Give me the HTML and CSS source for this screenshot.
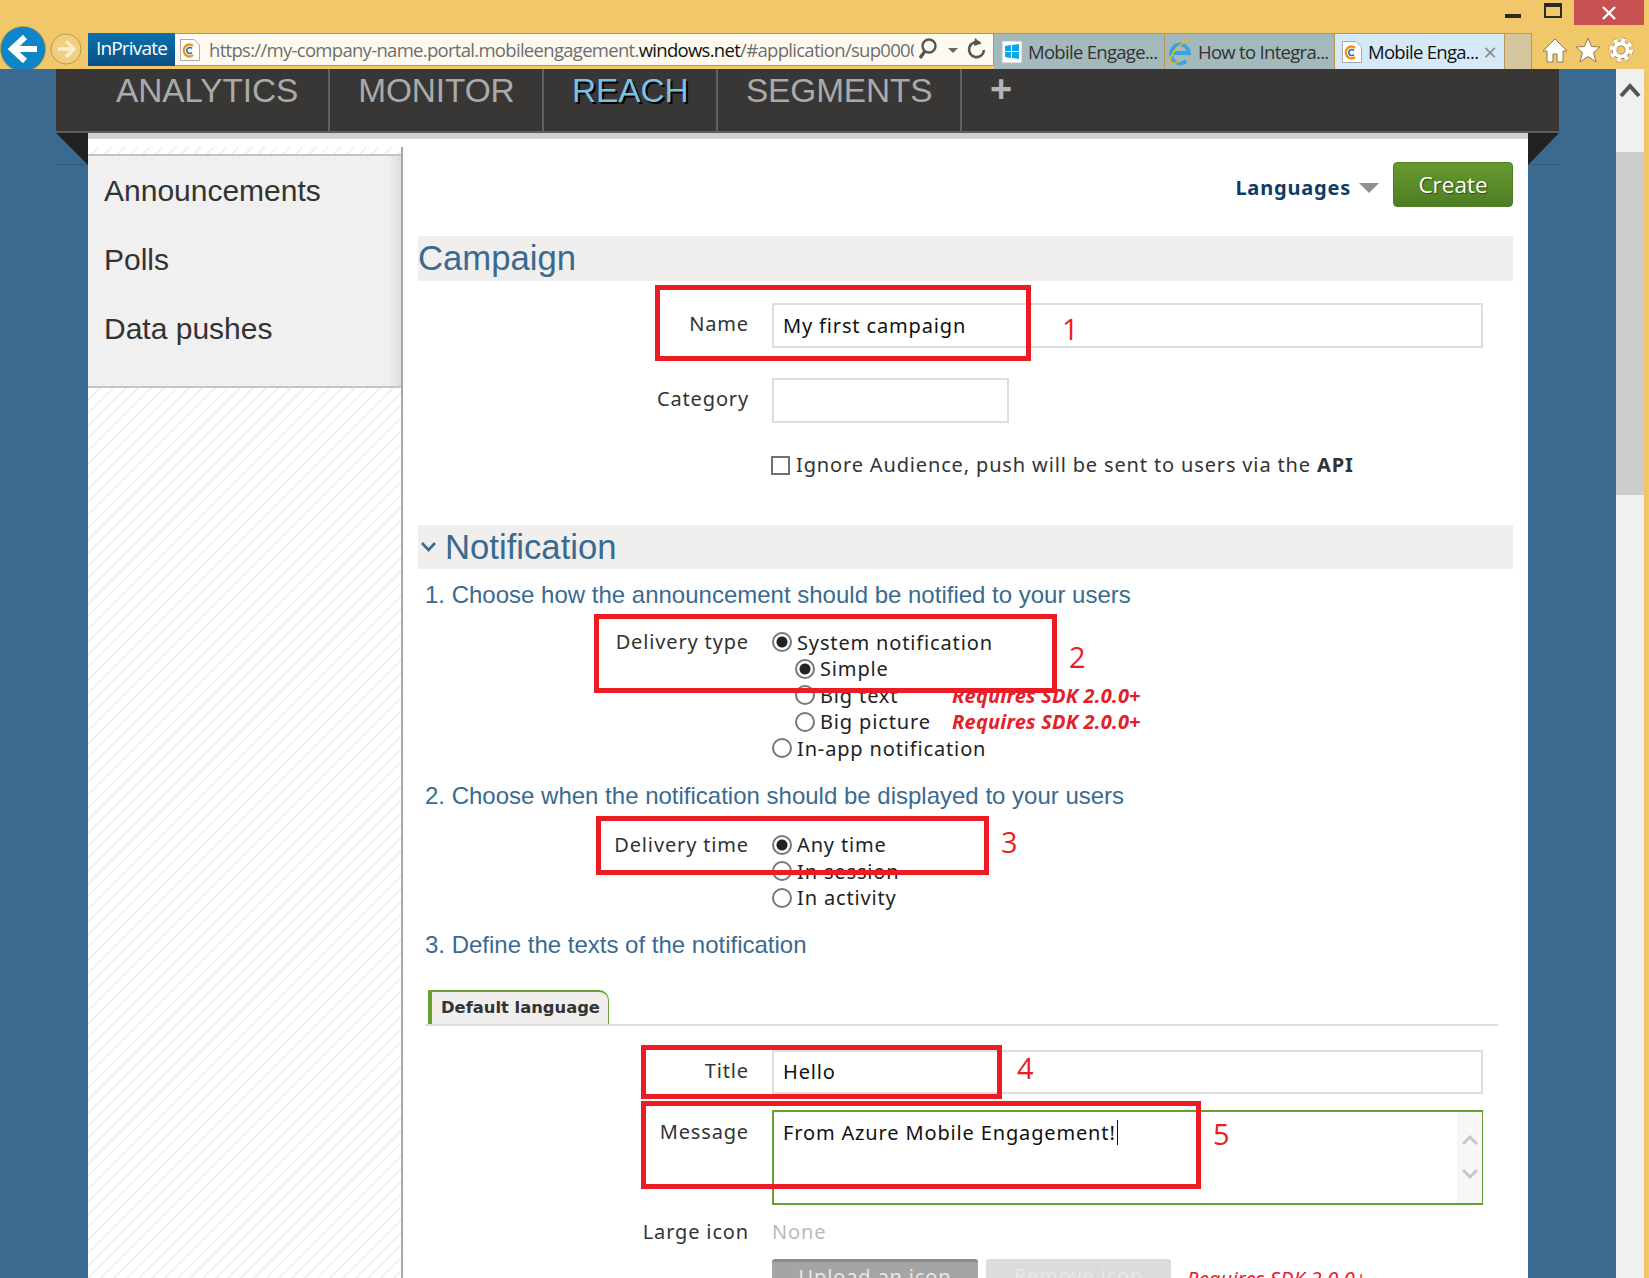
FILE: index.html
```html
<!DOCTYPE html>
<html lang="en">
<head>
    <meta charset="UTF-8" />
    <title>Mobile Engagement</title>
    <link rel="stylesheet" href="styles.css">
</head>
<body>
<div class="window">

    <!-- Browser chrome -->
    <div class="chrome">
        <div class="win-controls">
            <span class="win-min"></span>
            <span class="win-max"></span>
            <span class="win-close">
                <svg width="16" height="16" viewBox="0 0 16 16"><path d="M2 2 L14 14 M14 2 L2 14" stroke="#fff" stroke-width="2.4"/></svg>
            </span>
        </div>
        <div class="toolbar">
            <svg class="back-btn" width="46" height="46" viewBox="0 0 46 46">
                <circle cx="23" cy="23" r="22.5" fill="#0d85c6" stroke="#b8984e"/>
                <path d="M25 11 L12 23 L25 35 M13 23 H37" fill="none" stroke="#fff" stroke-width="6"/>
            </svg>
            <svg class="fwd-btn" width="32" height="32" viewBox="0 0 32 32">
                <circle cx="16" cy="16" r="15" fill="#f2cf80" stroke="#bb9a50"/>
                <path d="M16 8 L24 16 L16 24 M23 16 H8" fill="none" stroke="#fbeecb" stroke-width="3.4"/>
            </svg>
            <div class="inprivate">InPrivate</div>
            <div class="address">
                <svg class="page-icon" width="22" height="24" viewBox="0 0 22 24">
                    <path d="M1.500 1.500 H15 L20.500 7 V22.500 H1.500 Z" fill="#fff" stroke="#aaa"/>
                    <path d="M14 8 A5.500 6 0 1 0 14 17" fill="none" stroke="#ef8f1c" stroke-width="2.400"/>
                    <path d="M13 10.500 A3 3 0 1 0 13 14.500" fill="none" stroke="#2a6fb0" stroke-width="1.600"/>
                </svg>
                <div class="url">https://my-company-name.portal.mobileengagement.<b>windows.net</b>/#application/sup0000</div>
                <svg class="addr-tools" width="70" height="26" viewBox="0 0 70 26">
                    <circle cx="11" cy="9" r="6.500" fill="none" stroke="#555" stroke-width="2.400"/>
                    <path d="M7 14 L2 21" stroke="#555" stroke-width="3.400"/>
                    <path d="M30 11 H40 L35 16 Z" fill="#666"/>
                    <path d="M62 6 A7.500 7.500 0 1 0 66 13" fill="none" stroke="#555" stroke-width="2.600"/>
                    <path d="M57 1 L63.500 6.500 L56 9 Z" fill="#555"/>
                </svg>
            </div>
            <div class="tab">
                <svg width="22" height="24" viewBox="0 0 22 24">
                    <path d="M1 1 H21 V23 H1 Z" fill="#fff" stroke="#bbb"/>
                    <path d="M4 6 L10 5 V11 H4 Z M11 5 L18 4 V11 H11 Z M4 12 H10 V18 L4 17 Z M11 12 H18 V19 L11 18 Z" fill="#0aa5e8"/>
                </svg>
                <span>Mobile Engage...</span>
            </div>
            <div class="tab">
                <svg width="24" height="28" viewBox="0 0 24 28">
                    <path d="M4 15 H21 A9 9.500 0 1 0 18 23" fill="none" stroke="#3aa3e0" stroke-width="3.800"/>
                    <path d="M21 2 C11 6 2 16 2 24 C3 27 8 25 12 23" fill="none" stroke="#e8b81f" stroke-width="1.800"/>
                </svg>
                <span>How to Integra...</span>
            </div>
            <div class="tab tab-active">
                <svg width="22" height="24" viewBox="0 0 22 24">
                    <path d="M1.500 1.500 H15 L20.500 7 V22.500 H1.500 Z" fill="#fff" stroke="#aaa"/>
                    <path d="M14 8 A5.500 6 0 1 0 14 17" fill="none" stroke="#ef8f1c" stroke-width="2.400"/>
                    <path d="M13 10.500 A3 3 0 1 0 13 14.500" fill="none" stroke="#2a6fb0" stroke-width="1.600"/>
                </svg>
                <span>Mobile Enga...</span>
                <i class="tab-x">×</i>
            </div>
            <div class="tab-new"></div>
            <div class="tools">
                <svg width="26" height="26" viewBox="0 0 26 26">
                    <path d="M13 2 L25 14 H21 V25 H15 V17 H11 V25 H5 V14 H1 Z" fill="#fff" stroke="#8a7b55"/>
                </svg>
                <svg width="26" height="26" viewBox="0 0 26 26">
                    <path d="M13 1 L16.500 9.500 L25 10 L18.500 15.500 L21 25 L13 19.500 L5 25 L7.500 15.500 L1 10 L9.500 9.500 Z" fill="#fff" stroke="#8a7b55"/>
                </svg>
                <svg width="26" height="26" viewBox="0 0 26 26">
                    <circle cx="13" cy="13" r="10" fill="none" stroke="#8a7b55" stroke-width="5" stroke-dasharray="3.850 4"/>
                    <circle cx="13" cy="13" r="6.500" fill="none" stroke="#8a7b55" stroke-width="5.400"/>
                    <circle cx="13" cy="13" r="10" fill="none" stroke="#fff" stroke-width="4" stroke-dasharray="3.850 4"/>
                    <circle cx="13" cy="13" r="6.500" fill="none" stroke="#fff" stroke-width="4"/>
                </svg>
            </div>
        </div>
    </div>

    <div class="stage">
        <div class="page">
            <!-- Top menu -->
            <div class="nav">
                <a class="nav-item">ANALYTICS</a>
                <a class="nav-item">MONITOR</a>
                <a class="nav-item nav-active">REACH</a>
                <a class="nav-item">SEGMENTS</a>
                <a class="nav-item nav-plus">+</a>
            </div>

            <div class="sheet">
                <div class="sidebar">
                    <div class="side-menu">
                        <div class="side-item">Announcements</div>
                        <div class="side-item">Polls</div>
                        <div class="side-item">Data pushes</div>
                    </div>
                </div>

                <div class="main">
                    <div class="actions">
                        <span class="languages">Languages</span>
                        <span class="lang-arrow"></span>
                        <button class="btn-create">Create</button>
                    </div>

                    <!-- Campaign -->
                    <h2 class="bar">Campaign</h2>
                    <div class="row row-name">
                        <label>Name</label>
                        <div class="input">My first campaign</div>
                    </div>
                    <div class="row row-category">
                        <label>Category</label>
                        <div class="input input-short"></div>
                    </div>
                    <div class="row row-check">
                        <span></span>
                        <div class="check-line"><span class="check"></span><span>Ignore Audience, push will be sent to users via the <b>API</b></span></div>
                    </div>

                    <!-- Notification -->
                    <h2 class="bar bar-notif">
                        <svg width="17" height="12" viewBox="0 0 17 12"><path d="M2 2 L8.500 9 L15 2" fill="none" stroke="#3a6a8f" stroke-width="2.600"/></svg>
                        Notification
                    </h2>

                    <h3 class="step step-1">1. Choose how the announcement should be notified to your users</h3>
                    <div class="radios radios-type">
                        <label>Delivery type</label>
                        <div class="radio-list">
                            <div class="radio-row"><span class="radio on"></span>System notification</div>
                            <div class="radio-row sub"><span class="radio on"></span>Simple</div>
                            <div class="radio-row sub"><span class="radio"></span><span class="opt">Big text</span><em class="req">Requires SDK 2.0.0+</em></div>
                            <div class="radio-row sub"><span class="radio"></span><span class="opt">Big picture</span><em class="req">Requires SDK 2.0.0+</em></div>
                            <div class="radio-row"><span class="radio"></span>In-app notification</div>
                        </div>
                    </div>

                    <h3 class="step step-2">2. Choose when the notification should be displayed to your users</h3>
                    <div class="radios radios-time">
                        <label>Delivery time</label>
                        <div class="radio-list">
                            <div class="radio-row"><span class="radio on"></span>Any time</div>
                            <div class="radio-row"><span class="radio"></span>In session</div>
                            <div class="radio-row"><span class="radio"></span>In activity</div>
                        </div>
                    </div>

                    <h3 class="step step-3">3. Define the texts of the notification</h3>
                    <div class="tabs">
                        <div class="lang-tab">Default language</div>
                    </div>

                    <div class="row row-title">
                        <label>Title</label>
                        <div class="input">Hello</div>
                    </div>
                    <div class="row row-message">
                        <label>Message</label>
                        <div class="textarea">
                            <div class="textarea-text">From Azure Mobile Engagement!<span class="caret"></span></div>
                            <div class="textarea-scroll">
                                <svg width="18" height="12" viewBox="0 0 18 12"><path d="M2 10 L9 3 L16 10" fill="none" stroke="#c8c8c8" stroke-width="3"/></svg>
                                <svg width="18" height="12" viewBox="0 0 18 12"><path d="M2 2 L9 9 L16 2" fill="none" stroke="#c8c8c8" stroke-width="3"/></svg>
                            </div>
                        </div>
                    </div>
                    <div class="row row-icon">
                        <label>Large icon</label>
                        <div class="none">None</div>
                    </div>
                    <div class="row row-buttons">
                        <span></span>
                        <div class="icon-btns">
                            <button class="btn-upload">Upload an icon</button>
                            <button class="btn-remove">Remove icon</button>
                            <em class="req req-plain">Requires SDK 2.0.0+</em>
                        </div>
                    </div>
                </div>
            </div>
        </div>

        <div class="scrollbar">
            <svg width="22" height="18" viewBox="0 0 22 18"><path d="M2 15 L11 5 L20 15" fill="none" stroke="#555" stroke-width="4"/></svg>
            <div class="scroll-thumb"></div>
        </div>
    </div>

    <!-- Red annotations drawn over the screenshot -->
    <div class="mark mark-1"></div><span class="mark-num num-1">1</span>
    <div class="mark mark-2"></div><span class="mark-num num-2">2</span>
    <div class="mark mark-3"></div><span class="mark-num num-3">3</span>
    <div class="mark mark-4"></div><span class="mark-num num-4">4</span>
    <div class="mark mark-5"></div><span class="mark-num num-5">5</span>
</div>
</body>
</html>
```

FILE: styles.css
```css
* {
    box-sizing: border-box;
}

body {
    margin: 0;
    font-family: "Liberation Sans", Arial, sans-serif;
    background: #3a6a8f;
}

.window {
    position: relative;
    width: 1649px;
    height: 1278px;
    overflow: hidden;
    display: flex;
    flex-direction: column;
}

/* Browser chrome */
.chrome {
    height: 69px;
    flex: none;
    background: #f0c869;
    overflow: hidden;
    font-family: "Open Sans", sans-serif;
}

.win-controls {
    height: 33px;
    display: flex;
    justify-content: flex-end;
    align-items: flex-start;
    padding-right: 5px;
}

.win-min {
    width: 16px;
    height: 4px;
    background: #2a2a2a;
    margin: 14px 23px 0 0;
}

.win-max {
    width: 18px;
    height: 15px;
    border: 2px solid #2a2a2a;
    border-top-width: 4px;
    margin: 3px 12px 0 0;
}

.win-close {
    width: 70px;
    height: 25px;
    background: #c75050;
    display: flex;
    align-items: center;
    justify-content: center;
}

.toolbar {
    height: 36px;
    display: flex;
    align-items: flex-start;
}

.back-btn {
    margin-top: -7px;
    flex: none;
}

.fwd-btn {
    margin: 0 6px 0 4px;
    flex: none;
}

.inprivate {
    width: 87px;
    height: 33px;
    background: linear-gradient(#0a70ad, #0b4f85);
    color: #fff;
    font-size: 19px;
    line-height: 31px;
    text-align: center;
    letter-spacing: -0.8px;
    flex: none;
}

.address {
    width: 819px;
    height: 33px;
    background: #fffaf0;
    border: 1px solid #b8984e;
    border-left: none;
    display: flex;
    align-items: center;
    flex: none;
}

.page-icon {
    margin-left: 4px;
    flex: none;
}

.url {
    margin-left: 8px;
    margin-right: 7px;
    width: 705px;
    overflow: hidden;
    white-space: nowrap;
    font-size: 18.500px;
    letter-spacing: -0.7px;
    color: #6e6e6e;
    flex: none;
}

.url b {
    font-weight: normal;
    color: #111;
}

.addr-tools {
    flex: none;
    margin-left: -3px;
}

.tab {
    width: 171px;
    height: 36px;
    background: #a3b9bc;
    border-right: 1px solid #b8984e;
    border-top: 1px solid #b8984e;
    display: flex;
    align-items: center;
    gap: 5px;
    padding-left: 7px;
    font-size: 18.500px;
    letter-spacing: -0.7px;
    color: #333;
    white-space: nowrap;
    overflow: hidden;
    flex: none;
}

.tab + .tab {
    width: 170px;
    padding-left: 3px;
    gap: 6px;
}

.tab-active {
    background: #d6e9f9;
    color: #111;
}

.tab + .tab.tab-active {
    padding-left: 6px;
    gap: 5px;
}

.tab-x {
    font-style: normal;
    font-size: 24px;
    line-height: 20px;
    color: #8a8a8a;
    margin-left: 0;
}

.tab-new {
    width: 27px;
    height: 36px;
    background: #d5c6a0;
    border-top: 1px solid #b8984e;
    border-right: 1px solid #b8984e;
    flex: none;
}

.tools {
    display: flex;
    gap: 7px;
    margin: 4px 0 0 10px;
}

/* Page */
.stage {
    flex: 1;
    display: flex;
    min-height: 0;
    background: #f0c869;
}

.page {
    flex: 1;
    min-width: 0;
    padding-left: 56px;
    background: linear-gradient(#2f5a7a, #2f5a7a) no-repeat 56px 95px / 1503px 1px, #3a6a8f;
}

.nav {
    width: 1503px;
    height: 64px;
    background: #383735;
    border-bottom: 2px solid #5f5f5f;
    padding-left: 31px;
    display: flex;
}

.nav-item {
    padding: 0 27.500px 0 28px;
    border-right: 2px solid #5f5f5f;
    color: #aaa;
    font-size: 33.400px;
    line-height: 43px;
    letter-spacing: -0.1px;
}

.nav-item:first-child {
    padding-left: 29px;
    padding-right: 30px;
}

.nav-active {
    color: #7cc0e0;
    text-shadow: 2px 2px 0 #000;
}

.nav-plus {
    border: none;
    font-weight: bold;
    color: #b5b5b5;
    font-size: 38px;
    line-height: 40px;
}

.sheet {
    position: relative;
    width: 1440px;
    margin-left: 32px;
    height: 1145px;
    background: #fff;
    border-top: 6px solid #d0d0d0;
    display: flex;
}

/* The two folded corners under the menu */
.sheet::before,
.sheet::after {
    content: "";
    position: absolute;
    top: -6px;
    width: 0;
    height: 0;
    border-top: 32px solid #222120;
}

.sheet::before {
    left: -32px;
    border-left: 32px solid transparent;
}

.sheet::after {
    right: -31px;
    border-right: 31px solid transparent;
}

.sidebar {
    width: 315px;
    flex: none;
    margin-top: 8px;
    padding-top: 7px;
    border-right: 2px solid #a8a8a8;
    background: repeating-linear-gradient(135deg, #fff 0, #fff 7px, #f1f1f1 7px, #f1f1f1 9px);
}

.side-menu {
    height: 234px;
    padding-left: 16px;
    background: linear-gradient(to right, #f0f0f0 96%, #dcdcdc);
    border-top: 2px solid #c4c4c4;
    border-bottom: 2px solid #c8c4c0;
}

.side-item {
    height: 69px;
    font-size: 30px;
    line-height: 69px;
    color: #333;
}

.main {
    flex: 1;
    min-width: 0;
    padding: 23px 15px 0 15px;
    font-family: "Noto Sans", sans-serif;
    font-size: 20px;
    letter-spacing: 0.85px;
    color: #333;
}

.actions {
    height: 45px;
    display: flex;
    align-items: center;
    justify-content: flex-end;
}

.languages {
    font-weight: bold;
    letter-spacing: 0.8px;
    color: #0e3c66;
    margin-top: 6px;
}

.lang-arrow {
    width: 0;
    height: 0;
    margin: 6px 14px 0 8px;
    border-left: 10px solid transparent;
    border-right: 10px solid transparent;
    border-top: 10px solid #8f8f8f;
}

.btn-create {
    width: 120px;
    height: 45px;
    border: 1px solid #4f8025;
    border-radius: 4px;
    background: linear-gradient(#659a2e, #4e7d25);
    color: #fff;
    font-family: "Open Sans", sans-serif;
    font-size: 22.500px;
    text-shadow: 1px 1px 1px #2d4a14;
    padding: 0;
}

.bar {
    margin: 29px 0 0;
    height: 45px;
    background: #f0efed;
    font-family: "Liberation Sans", Arial, sans-serif;
    font-size: 34.700px;
    font-weight: normal;
    line-height: 44px;
    letter-spacing: 0;
    color: #3a6a8f;
}

.bar-notif {
    margin-top: 47px;
    height: 44px;
    display: flex;
    align-items: center;
    gap: 8px;
    padding-left: 2px;
}

.step {
    margin: 11px 0 0 7px;
    font-family: "Liberation Sans", Arial, sans-serif;
    font-size: 24px;
    font-weight: normal;
    line-height: 30px;
    letter-spacing: 0;
    color: #3a6a8f;
}

.step-2 {
    margin-top: 19px;
}

.step-3 {
    margin-top: 19px;
}

.row,
.radios {
    display: grid;
    grid-template-columns: 331px 711px;
    column-gap: 23px;
}

.row label,
.radios label {
    text-align: right;
}

.row-name {
    margin-top: 22px;
}

.row-category {
    margin-top: 30px;
}

.row-check {
    margin-top: 29px;
}

.row-title {
    margin-top: 24px;
}

.row-message {
    margin-top: 16px;
}

.row-icon {
    margin-top: 13px;
}

.row-buttons {
    margin-top: 14px;
}

.row-name label,
.row-category label {
    padding-top: 7px;
}

.row-title label {
    padding-top: 7px;
}

.row-message label {
    padding-top: 8px;
}

.input {
    height: 44px;
    border: 2px solid #ddd;
    padding: 0 9px;
    line-height: 40px;
    color: #111;
}

.row-name .input,
.row-category .input {
    height: 45px;
    line-height: 41px;
}

.input-short {
    width: 237px;
}

.check-line {
    display: flex;
    align-items: center;
    white-space: nowrap;
    line-height: 26px;
    margin-left: -1px;
}

.check {
    width: 19px;
    height: 19px;
    border: 2px solid #707070;
    margin-right: 6px;
}

.radios-type {
    margin-top: 19px;
}

.radios-time {
    margin-top: 21px;
}

.radios label {
    line-height: 26px;
}

.radio-row {
    height: 26.500px;
    display: flex;
    align-items: center;
    white-space: nowrap;
    color: #222;
}

.radio-row.sub {
    padding-left: 23px;
}

.radio {
    width: 20px;
    height: 20px;
    margin-right: 5px;
    border: 2px solid #777;
    border-radius: 50%;
    background: #fff;
    flex: none;
}

.radio.on {
    background: radial-gradient(circle, #222 0, #222 5px, #fff 6px);
}

.opt {
    width: 132px;
}

.req {
    font-weight: bold;
    font-size: 20px;
    letter-spacing: 0.2px;
    color: #e3212b;
}

.req-plain {
    font-weight: normal;
    margin: 6px 0 0 16px;
}

.tabs {
    margin: 30px 15px 0 7px;
    height: 36px;
    padding-left: 3px;
    border-bottom: 2px solid #ddd;
}

.lang-tab {
    width: 181px;
    height: 34px;
    background: #f0efed;
    border: 1px solid #65a030;
    border-width: 2px 1px 0 4px;
    border-top-right-radius: 10px;
    padding-left: 9px;
    font-family: "DejaVu Sans", sans-serif;
    font-size: 16.350px;
    font-weight: bold;
    letter-spacing: 0;
    line-height: 32px;
    white-space: nowrap;
}

.textarea {
    height: 95px;
    border: 2px solid #65a030;
    border-right-width: 1px;
    display: flex;
    color: #111;
}

.textarea-text {
    flex: 1;
    padding: 8px 9px;
    line-height: 26px;
}

.caret {
    display: inline-block;
    width: 1px;
    height: 25px;
    margin-left: 1px;
    background: #111;
    vertical-align: -5px;
}

.textarea-scroll {
    width: 25px;
    background: #f7f7f7;
    display: flex;
    flex-direction: column;
    align-items: center;
    gap: 22px;
    padding-top: 22px;
}

.none {
    color: #bbb;
}

.icon-btns {
    display: flex;
    align-items: flex-start;
    white-space: nowrap;
}

.icon-btns button {
    height: 40px;
    border: none;
    border-radius: 3px;
    font-family: inherit;
    font-size: 20px;
    letter-spacing: 0.85px;
    color: #e8e8e8;
    padding: 0 0 8px;
}

.btn-upload {
    width: 206px;
    margin-right: 8px;
    background: #a5a5a5;
    border-top: 3px solid #8c8c8c !important;
}

.btn-remove {
    width: 185px;
    background: #dcdcdc;
}

/* Scrollbar */
.scrollbar {
    width: 28px;
    margin: 0 5px 0 0;
    background: #f0f0f0;
    display: flex;
    flex-direction: column;
    align-items: center;
    padding-top: 12px;
    flex: none;
}

.scroll-thumb {
    align-self: stretch;
    height: 343px;
    margin-top: 53px;
    background: #cdcdcd;
}

/* Annotations */
.mark {
    position: absolute;
    border: 5px solid #ed1c24;
}

.mark-1 { left: 655px; top: 285px; width: 376px; height: 76px; }
.mark-2 { left: 594px; top: 614px; width: 463px; height: 79px; }
.mark-3 { left: 596px; top: 816px; width: 393px; height: 59px; }
.mark-4 { left: 641px; top: 1045px; width: 361px; height: 54px; }
.mark-5 { left: 641px; top: 1101px; width: 560px; height: 88px; }

.mark-num {
    position: absolute;
    font-family: "Open Sans", sans-serif;
    font-size: 29px;
    line-height: 40px;
    color: #ed1c24;
}

.num-1 { left: 1062px; top: 309px; }
.num-2 { left: 1069px; top: 637px; }
.num-3 { left: 1001px; top: 822px; }
.num-4 { left: 1017px; top: 1048px; }
.num-5 { left: 1213px; top: 1114px; }
```
